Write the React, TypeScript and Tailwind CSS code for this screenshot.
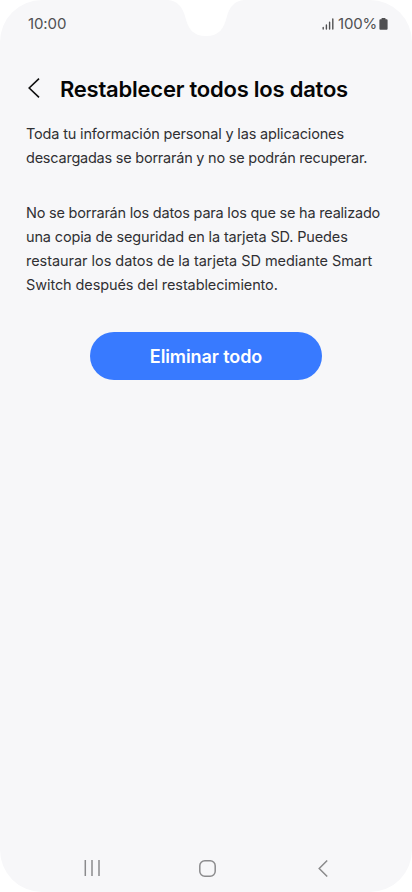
import React from 'react'

const intro = [
  { text: 'Toda tu información personal y las aplicaciones', className: 'tracking-[-0.165px]' },
  { text: 'descargadas se borrarán y no se podrán recuperar.', className: 'tracking-[-0.23px]' },
]

const backupNote = [
  { text: 'No se borrarán los datos para los que se ha realizado', className: 'tracking-[-0.215px]' },
  { text: 'una copia de seguridad en la tarjeta SD. Puedes', className: 'tracking-[-0.14px]' },
  { text: 'restaurar los datos de la tarjeta SD mediante Smart', className: 'tracking-[-0.045px]' },
  { text: 'Switch después del restablecimiento.', className: 'tracking-[-0.1px]' },
]

const Paragraph: React.FC<{ lines: typeof intro }> = ({ lines }) => (
  <p className="text-[14.5px] leading-6 text-[#303033]">
    {lines.map((line) => (
      <span key={line.text} className={`block whitespace-nowrap ${line.className}`}>
        {line.text}
      </span>
    ))}
  </p>
)

const StatusBar: React.FC = () => (
  <div className="flex h-12 items-center justify-between pl-7 pr-6 text-[15px] text-[#505052]">
    <span className="tracking-[-0.1px]">10:00</span>
    <div className="flex items-center">
      <svg className="mr-1 h-3 w-3" viewBox="0 0 12 12" fill="none" stroke="currentColor" strokeWidth="1.4" strokeLinecap="round">
        <path d="M1.2 9.5V11M4.4 7V11M7.6 4.2V11M10.8 1V11" />
      </svg>
      <span className="tracking-[-0.2px]">100%</span>
      <svg className="ml-0.5 h-3 w-[9px]" viewBox="0 0 9 12" fill="currentColor">
        <path d="M3 0H6Q6.5 0 6.5 .5V1.2H7.6Q8.6 1.2 8.6 2.2V10.8Q8.6 11.8 7.6 11.8H1.4Q.4 11.8 .4 10.8V2.2Q.4 1.2 1.4 1.2H2.5V.5Q2.5 0 3 0Z" />
      </svg>
    </div>
  </div>
)

const App: React.FC = () => {
  return (
    <div className="h-[892px] w-[412px] bg-white font-['Inter',sans-serif]">
      <div className="relative flex h-full flex-col overflow-hidden rounded-[42px] bg-[#f7f7f9]">
        {/* Camera notch */}
        <svg className="absolute left-[168px] top-0 h-9 w-[76px]" viewBox="0 0 76 36" fill="#fff">
          <path d="M0 0C9 1 14 6 17 16C20 29 25 36 38 36C51 36 56 29 59 16C62 6 67 1 76 0Z" />
        </svg>

        <StatusBar />

        {/* Title */}
        <header className="mt-5 flex h-10 items-center pl-7">
          <svg className="h-5 w-3" viewBox="0 0 12 20" fill="none" stroke="#111" strokeWidth="1.6">
            <path d="M11 .6L1.2 10L11 19.4" />
          </svg>
          <h1 className="ml-5 whitespace-nowrap pt-0.5 text-[22px] font-semibold leading-10 tracking-[-0.23px] text-[#050505]">
            Restablecer todos los datos
          </h1>
        </header>

        <main className="flex flex-1 flex-col pl-[26px] pt-3.5">
          <Paragraph lines={intro} />
          <div className="mt-[31px]">
            <Paragraph lines={backupNote} />
          </div>
          <button className="ml-16 mt-[35px] h-12 w-[232px] rounded-full bg-[#387aff] text-[18px] font-semibold tracking-[-0.1px] text-white">
            Eliminar todo
          </button>
        </main>

        {/* Navigation bar */}
        <nav className="flex h-12 items-center text-[#8b8b8d]">
          <svg className="ml-[84px] h-4 w-4" viewBox="0 0 16 16" fill="none" stroke="currentColor" strokeWidth="1.5">
            <path d="M1.3 0V16M8 0V16M15 0V16" />
          </svg>
          <svg className="ml-[99px] h-[17px] w-[17px]" viewBox="0 0 17 17" fill="none" stroke="currentColor" strokeWidth="1.5">
            <rect x=".8" y=".8" width="15.4" height="15.4" rx="5" />
          </svg>
          <svg className="ml-[102px] h-[17px] w-[10px]" viewBox="0 0 10 17" fill="none" stroke="currentColor" strokeWidth="1.5">
            <path d="M9.2 .5L1.2 8.5L9.2 16.5" />
          </svg>
        </nav>
      </div>
    </div>
  )
}

export default App
